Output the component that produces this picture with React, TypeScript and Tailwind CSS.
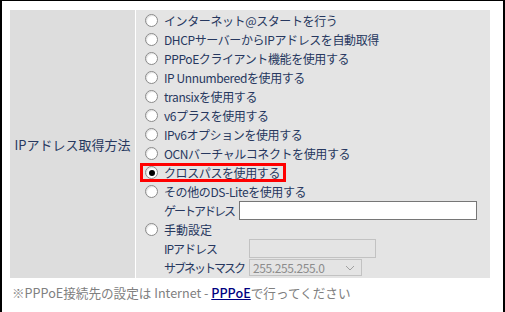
import React from "react";

const font = { fontFamily: '"Noto Sans CJK JP", "Liberation Sans", sans-serif' };

function Radio({ checked = false }: { checked?: boolean }) {
  return (
    <span className="flex h-[13px] w-[13px] shrink-0 items-center justify-center rounded-full border border-[#8a8a8a] bg-white shadow-[inset_1px_1px_1px_rgba(0,0,0,0.12)]">
      {checked && <span className="h-[6px] w-[6px] rounded-full bg-black" />}
    </span>
  );
}

const options = [
  "インターネット@スタートを行う",
  "DHCPサーバーからIPアドレスを自動取得",
  "PPPoEクライアント機能を使用する",
  "IP Unnumberedを使用する",
  "transixを使用する",
  "v6プラスを使用する",
  "IPv6オプションを使用する",
  "OCNバーチャルコネクトを使用する",
  "クロスパスを使用する",
  "その他のDS-Liteを使用する",
];

export default function App() {
  return (
    <div
      className="h-[312px] w-[505px] overflow-hidden border-x-2 border-t border-black bg-white pl-2 pt-[9px] text-[12px] leading-none"
      style={font}
    >
      <div className="flex w-[480px] gap-px bg-white">
        <div className="flex w-[125px] items-center justify-center bg-[#dddddd] text-[13px] text-[#27385f]">
          IPアドレス取得方法
        </div>
        <div className="flex flex-1 flex-col bg-[#e4e4e4] py-px pl-[9px] text-[#27385f]">
          {options.map((label, i) => (
            <div key={label} className="relative flex h-[19px] items-center gap-[6px] whitespace-nowrap">
              <Radio checked={i === 8} />
              <span className="tracking-[-0.4px]">{label}</span>
              {i === 8 && (
                <span className="pointer-events-none absolute -left-[5px] top-0 h-[19px] w-[146px] border-[3px] border-[#ff0000]" />
              )}
            </div>
          ))}
          <div className="flex h-[19px] items-center whitespace-nowrap pl-[19px]">
            <span className="w-[75px] shrink-0 tracking-[-2px]">ゲートアドレス</span>
            <span className="h-[19px] w-[238px] border border-[#767676] bg-white" />
          </div>
          <div className="flex h-[19px] items-center gap-[6px]">
            <Radio />
            <span>手動設定</span>
          </div>
          <div className="flex h-[19px] items-center whitespace-nowrap pl-[19px]">
            <span className="w-[85px] shrink-0 tracking-[-1px]">IPアドレス</span>
            <span className="h-[19px] w-[127px] border border-[#c2c2c2] bg-[#e4e4e4]" />
          </div>
          <div className="flex h-[19px] items-center whitespace-nowrap pl-[19px]">
            <span className="w-[85px] shrink-0 tracking-[-2px]">サブネットマスク</span>
            <span className="flex h-[17px] w-[113px] items-center justify-between border border-[#c2c2c2] bg-[#e4e4e4] pl-[3px] pr-[6px] text-[#8c8c8c]">
              <span className="tracking-[-0.4px]">255.255.255.0</span>
              <svg width="10" height="6" viewBox="0 0 10 6" fill="none">
                <path d="M1 1l4 4 4-4" stroke="#a0a0a0" strokeWidth="1" />
              </svg>
            </span>
          </div>
        </div>
      </div>
      <div className="mt-[9px] whitespace-nowrap pl-[2px] text-[12.6px] text-[#808080]">
        ※PPPoE接続先の設定は Internet - {" "}
        <a href="#" className="font-medium text-[#000080] underline">
          PPPoE
        </a>
        で行ってください
      </div>
    </div>
  );
}
